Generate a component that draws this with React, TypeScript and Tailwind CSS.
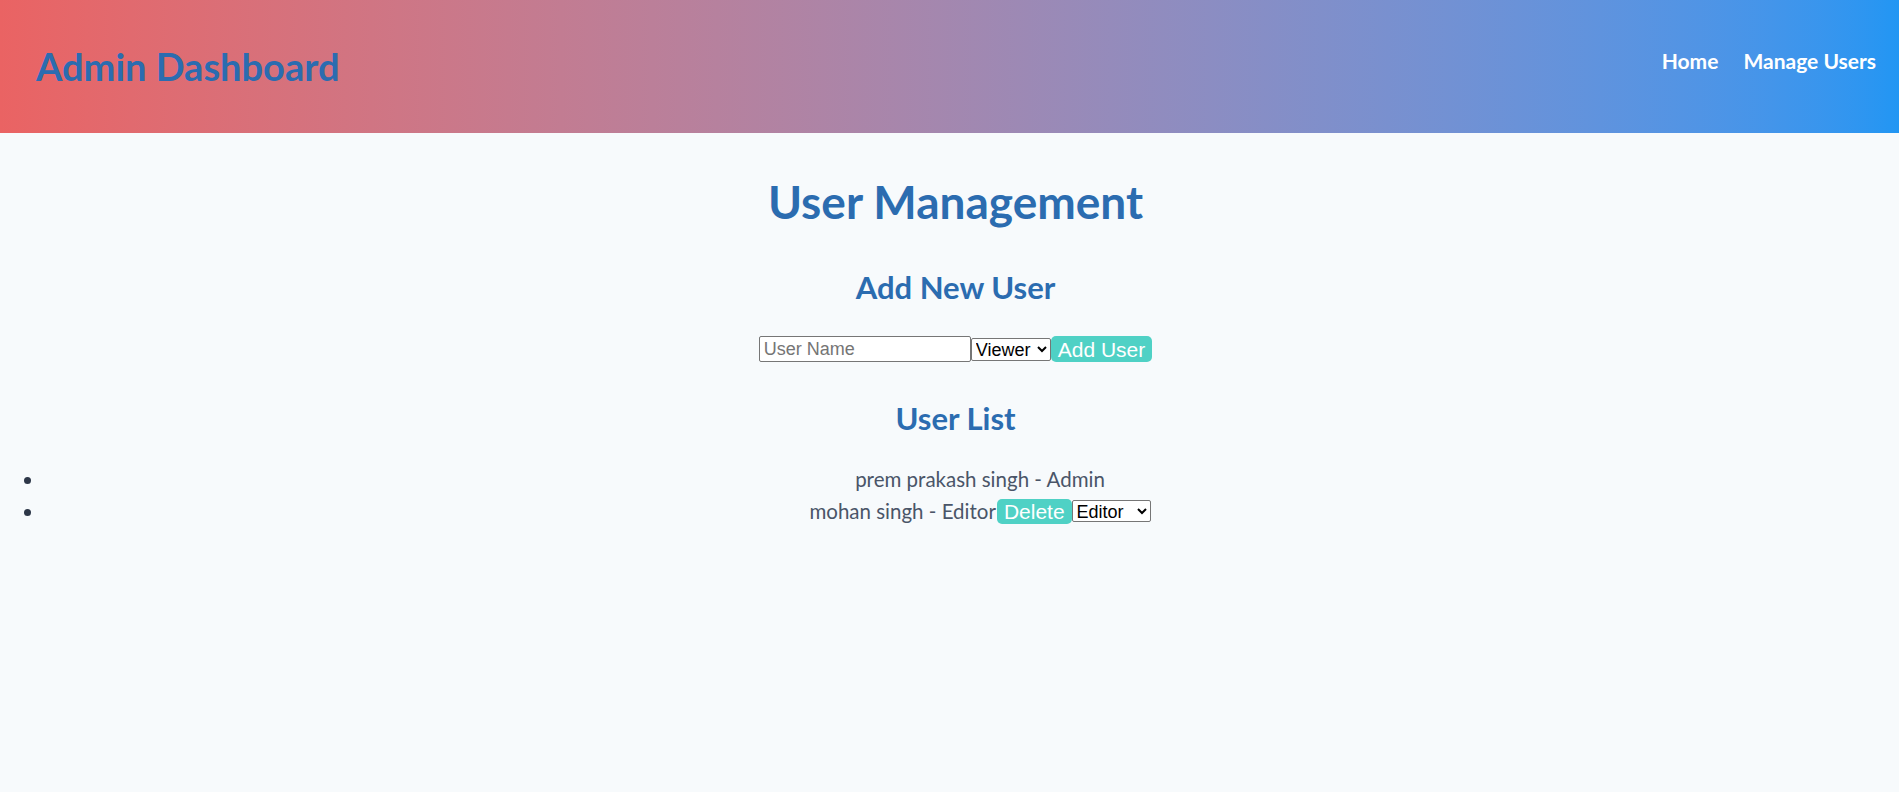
import { useState } from 'react';

type User = { id: number; name: string; role: string };

export default function App() {
  const [users] = useState<User[]>([
    { id: 1, name: 'prem prakash singh', role: 'Admin' },
    { id: 2, name: 'mohan singh', role: 'Editor' },
  ]);

  return (
    <div className="min-h-[792px] bg-[#f7fafc] font-['Lato',sans-serif]">
      <header className="flex h-[133px] items-center justify-between bg-gradient-to-r from-[#ea6363] to-[#2196f3] pl-9 pr-[23px]">
        <h1 className="-translate-y-[1px] text-[38px] font-bold text-[#2b6cb0] leading-none">Admin Dashboard</h1>
        <nav className="flex -translate-y-[6px] gap-[25px] text-[21px] font-bold text-white">
          <a href="#">Home</a>
          <a href="#">Manage Users</a>
        </nav>
      </header>

      <main className="flex flex-col items-center pl-[12px] pt-[40px] text-[#4a5568]">
        <h2 className="text-[46px] font-bold leading-tight text-[#2b6cb0]">User Management</h2>

        <h3 className="mt-[37px] text-[31px] font-bold leading-tight text-[#2b6cb0]">Add New User</h3>
        <div className="mt-[30px] flex items-center font-['Liberation_Sans',Arial,sans-serif]">
          <input
            placeholder="User Name"
            className="h-[26px] w-[212px] border border-[#767676] bg-white px-[4px] text-[18px] text-black placeholder:text-[#757575] rounded-[2px]"
          />
          <select className="h-[23px] w-[80px] border border-[#767676] bg-white text-[18px] text-black rounded-[2px]">
            <option>Viewer</option>
            <option>Editor</option>
            <option>Admin</option>
          </select>
          <button className="h-[26px] rounded-[5px] bg-[#4fd1c5] px-[7px] text-[21px] leading-none text-white">
            Add User
          </button>
        </div>

        <h3 className="mt-[37px] text-[31px] font-bold leading-tight text-[#2b6cb0]">User List</h3>
        <ul className="-ml-[12px] mt-[25px] list-disc self-stretch pl-[44px] text-[20.5px] font-['Lato',sans-serif] marker:text-[#2d3748]">
          {users.map((u) => (
            <li key={u.id} className="text-center leading-[32px]">
              <span className="ml-[17px] inline-flex items-center align-top">
                {u.name} - {u.role}
                {u.role !== 'Admin' && (
                  <>
                    <button className="ml-[1px] h-[25px] rounded-[5px] bg-[#4fd1c5] px-[7px] font-['Liberation_Sans',Arial,sans-serif] text-[21px] leading-none text-white">
                      Delete
                    </button>
                    <select className="h-[22px] w-[79px] border border-[#767676] bg-white font-['Liberation_Sans',Arial,sans-serif] text-[18px] text-black rounded-[2px]">
                      <option>Editor</option>
                      <option>Viewer</option>
                      <option>Admin</option>
                    </select>
                  </>
                )}
              </span>
            </li>
          ))}
        </ul>
      </main>
    </div>
  );
}
